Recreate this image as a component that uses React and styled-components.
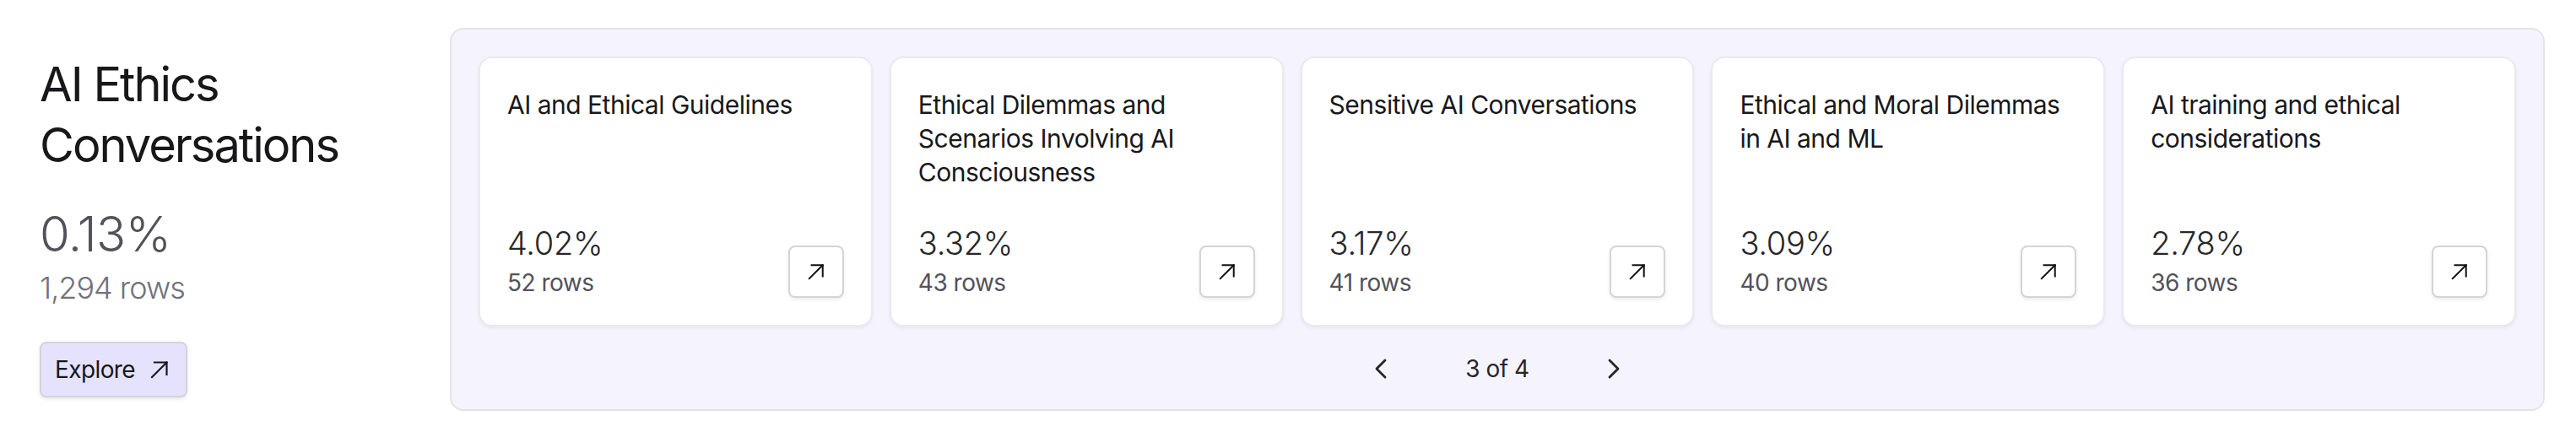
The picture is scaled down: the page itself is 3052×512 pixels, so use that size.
import React from "react";
import styled, { createGlobalStyle } from "styled-components";
import { ChevronLeft, ChevronRight } from "lucide-react";

const GlobalStyle = createGlobalStyle`
  html, body { margin: 0; padding: 0; background: #ffffff; }
  body { font-family: Inter, "Noto Sans", sans-serif; -webkit-font-smoothing: antialiased; }
  * { box-sizing: border-box; }
`;

const Page = styled.div`
  display: flex;
  gap: 48px;
  padding: 33px 37px 25px 47px;
  width: 3052px;
  height: 512px;
`;

const Summary = styled.section`
  width: 438px;
  flex: none;
  display: flex;
  flex-direction: column;
  align-items: flex-start;
  padding-top: 31px;
`;

const Title = styled.h1`
  margin: 0;
  font-size: 56px;
  line-height: 72px;
  font-weight: 400;
  color: #18181b;
  letter-spacing: -2px;
`;

const BigPercent = styled.div`
  margin-top: 33px;
  font-size: 58px;
  line-height: 72px;
  font-weight: 300;
  color: #52525b;
  letter-spacing: -0.5px;
`;

const TotalRows = styled.div`
  font-size: 36px;
  line-height: 56px;
  font-weight: 300;
  color: #71717a;
  letter-spacing: -1px;
`;

const ExploreButton = styled.button`
  margin-top: 36px;
  height: 66px;
  display: flex;
  align-items: center;
  gap: 18px;
  padding: 0 20px 0 16px;
  background: #e5e2fd;
  border: 2px solid #d4d4d8;
  border-radius: 8px;
  box-shadow: 0 2px 4px rgba(0, 0, 0, 0.1);
  font-family: Inter, sans-serif;
  font-size: 28px;
  letter-spacing: -0.6px;
  color: #18181b;
  cursor: pointer;
`;

const Panel = styled.section`
  flex: 1;
  display: flex;
  flex-direction: column;
  background: #f5f4fe;
  border: 2px solid #e4e4e7;
  border-radius: 16px;
  padding: 32px 32px 27px;
`;

const CardGrid = styled.div`
  display: grid;
  grid-template-columns: repeat(5, 1fr);
  gap: 20px;
`;

const Card = styled.article`
  height: 320px;
  display: flex;
  flex-direction: column;
  justify-content: space-between;
  background: #ffffff;
  border: 2px solid #e9e9ef;
  border-radius: 16px;
  box-shadow: 0 2px 4px rgba(0, 0, 0, 0.06);
  padding: 35px 32px 32px;
`;

const CardTitle = styled.h2`
  margin: 0;
  font-size: 30px;
  line-height: 40px;
  font-weight: 400;
  color: #18181b;
  letter-spacing: -0.5px;
`;

const CardFooter = styled.div`
  display: flex;
  align-items: flex-end;
  justify-content: space-between;
`;

const Stats = styled.div`
  display: flex;
  flex-direction: column;
`;

const Percent = styled.div`
  font-size: 38px;
  line-height: 58px;
  font-weight: 300;
  color: #27272a;
  letter-spacing: -0.3px;
`;

const Rows = styled.div`
  font-size: 28px;
  line-height: 36px;
  font-weight: 400;
  color: #52525b;
  letter-spacing: -0.5px;
`;

const IconButton = styled.button`
  width: 66px;
  height: 62px;
  display: flex;
  align-items: center;
  justify-content: center;
  padding: 0;
  background: #ffffff;
  border: 2px solid #d4d4d8;
  border-radius: 8px;
  box-shadow: 0 2px 4px rgba(0, 0, 0, 0.08);
  color: #111111;
  cursor: pointer;
`;

const Pager = styled.nav`
  margin-top: 30px;
  height: 40px;
  display: flex;
  align-items: center;
  justify-content: center;
  gap: 80px;
`;

const PagerButton = styled.button`
  width: 40px;
  height: 40px;
  display: flex;
  align-items: center;
  justify-content: center;
  padding: 0;
  background: none;
  border: none;
  color: #27272a;
  cursor: pointer;
`;

const PagerLabel = styled.span`
  font-size: 28px;
  line-height: 40px;
  color: #27272a;
  letter-spacing: -0.5px;
`;

const ArrowUpRight = ({ size = 22, stroke = 2.2 }) => (
  <svg width={size} height={size} viewBox="0 0 22 22" fill="none" stroke="currentColor" strokeWidth={stroke} strokeLinecap="square">
    <path d="M2 20 L19.5 2.5" />
    <path d="M5 2.5 H19.5 V17" />
  </svg>
);

const topics = [
  { title: "AI and Ethical Guidelines", pct: "4.02%", rows: "52 rows" },
  { title: "Ethical Dilemmas and Scenarios Involving AI Consciousness", pct: "3.32%", rows: "43 rows" },
  { title: "Sensitive AI Conversations", pct: "3.17%", rows: "41 rows" },
  { title: "Ethical and Moral Dilemmas in AI and ML", pct: "3.09%", rows: "40 rows" },
  { title: "AI training and ethical considerations", pct: "2.78%", rows: "36 rows" },
];

export default function App() {
  return (
    <>
      <GlobalStyle />
      <Page>
        <Summary>
          <Title>AI Ethics Conversations</Title>
          <BigPercent>0.13%</BigPercent>
          <TotalRows>1,294 rows</TotalRows>
          <ExploreButton>
            Explore
            <ArrowUpRight size={22} />
          </ExploreButton>
        </Summary>
        <Panel>
          <CardGrid>
            {topics.map((t) => (
              <Card key={t.title}>
                <CardTitle>{t.title}</CardTitle>
                <CardFooter>
                  <Stats>
                    <Percent>{t.pct}</Percent>
                    <Rows>{t.rows}</Rows>
                  </Stats>
                  <IconButton aria-label="Open">
                    <ArrowUpRight size={20} stroke={2.2} />
                  </IconButton>
                </CardFooter>
              </Card>
            ))}
          </CardGrid>
          <Pager>
            <PagerButton aria-label="Previous">
              <ChevronLeft size={40} strokeWidth={1.7} />
            </PagerButton>
            <PagerLabel>3 of 4</PagerLabel>
            <PagerButton aria-label="Next">
              <ChevronRight size={40} strokeWidth={1.7} />
            </PagerButton>
          </Pager>
        </Panel>
      </Page>
    </>
  );
}
